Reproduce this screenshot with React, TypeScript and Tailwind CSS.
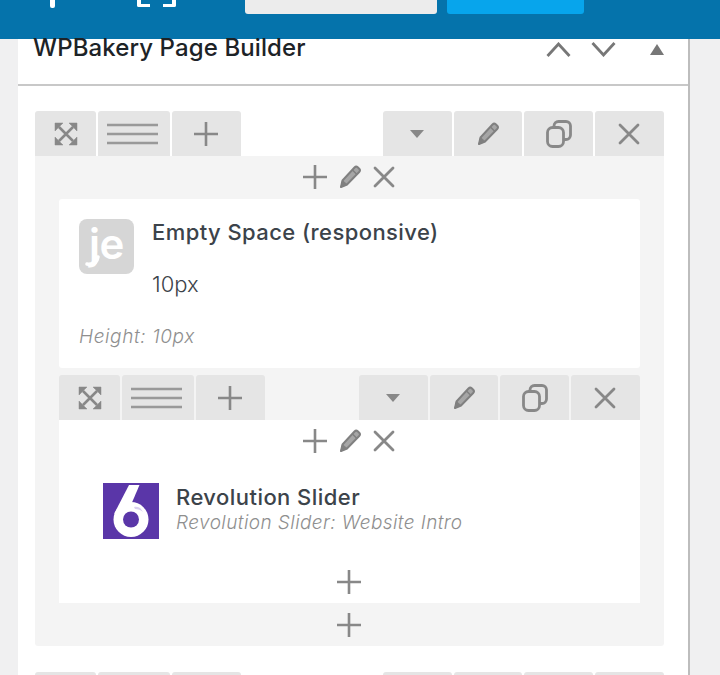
const font = { fontFamily: 'Inter, "Liberation Sans", sans-serif' }

function Plus({ size = 26 }: { size?: number }) {
  return (
    <svg width={size} height={size} viewBox="0 0 26 26" fill="none" stroke="#888" strokeWidth="2.6">
      <path d="M13 1v24M1 13h24" />
    </svg>
  )
}

function Cross({ size = 24 }: { size?: number }) {
  return (
    <svg width={size} height={size} viewBox="0 0 24 24" fill="none" stroke="#888" strokeWidth="2.8" strokeLinecap="round">
      <path d="M3 3l18 18M21 3L3 21" />
    </svg>
  )
}

function Pencil({ size = 24 }: { size?: number }) {
  return (
    <svg width={size} height={size} viewBox="0 0 24 24" fill="none">
      <path d="M16.500 2.500c1-1 2.300-1 3.200-.2l1.500 1.500c.9.900.9 2.200 0 3.200L9 19.500 3 22l1.500-6.500z" fill="#a6a6a6" stroke="#808080" strokeWidth="2" strokeLinejoin="round" />
      <path d="M3 22l1.500-6.500L9 19.500z" fill="#808080" stroke="#808080" />
      <path d="M14.500 5l4.500 4.500" stroke="#808080" strokeWidth="1.500" />
    </svg>
  )
}

function Expand() {
  return (
    <svg width="24" height="24" viewBox="0 0 24 24" fill="#888" stroke="#888">
      <path d="M1 1h8L6.500 3.500 3.500 6.500 1 9z M23 1h-8l2.500 2.500 3 3L23 9z M1 23h8l-2.500-2.500-3-3L1 15z M23 23h-8l2.500-2.500 3-3L23 15z" strokeWidth="0.5" />
      <path d="M5 5l14 14M19 5L5 19" fill="none" strokeWidth="2.600" />
    </svg>
  )
}

function Lines() {
  return (
    <svg width="51" height="24" viewBox="0 0 51 24" fill="none" stroke="#999" strokeWidth="2.600">
      <path d="M0 3h51M0 12h51M0 21h51" />
    </svg>
  )
}

function Caret() {
  return (
    <svg width="14" height="8" viewBox="0 0 14 8" fill="#888">
      <path d="M0 0h14L7 8z" />
    </svg>
  )
}

function Copy() {
  return (
    <svg width="26" height="28" viewBox="0 0 26 28" fill="none" stroke="#888" strokeWidth="2.800">
      <rect x="1.500" y="7.500" width="16" height="19" rx="5" />
      <path d="M8 7V6c0-2.500 2-4.500 4.500-4.500H20c2.500 0 4.500 2 4.500 4.500v9c0 2.500-2 4.500-4.500 4.500h-2.500" />
    </svg>
  )
}

function Tab({ className, children }: { className: string; children: React.ReactNode }) {
  return (
    <div className={`h-[45px] flex items-center justify-center bg-[#e5e5e5] rounded-t-[3px] ${className}`}>
      {children}
    </div>
  )
}

function RowToolbar() {
  return (
    <div className="flex justify-between h-[45px] shrink-0 overflow-hidden">
      <div className="flex gap-[2px]">
        <Tab className="w-[61px]"><Expand /></Tab>
        <Tab className="w-[72px] pr-[3px]"><Lines /></Tab>
        <Tab className="w-[69px] pr-[2px]"><Plus /></Tab>
      </div>
      <div className="flex gap-[2px]">
        <Tab className="w-[69px] pr-[2px]"><Caret /></Tab>
        <Tab className="w-[68px]"><Pencil /></Tab>
        <Tab className="w-[69px]"><Copy /></Tab>
        <Tab className="w-[69px] pr-[2px]"><Cross /></Tab>
      </div>
    </div>
  )
}

function ColumnControls() {
  return (
    <div className="h-[43px] flex items-center justify-center gap-[10px] pb-[1px] pr-[2px]">
      <Plus />
      <Pencil />
      <Cross />
    </div>
  )
}

function RevSliderLogo() {
  return (
    <svg width="56" height="56" viewBox="0 0 56 56" className="shrink-0">
      <rect width="56" height="56" fill="#5a36a8" />
      <path d="M26 2h10.500L29 19.500 11 31z" fill="#fff" />
      <circle cx="28" cy="36.500" r="17.500" fill="#fff" />
      <path d="M31 24c4-1 7 1 9 5-2-2-5-3-8-3z" fill="#d9cff0" />
      <circle cx="28" cy="36.500" r="8" fill="#5a36a8" />
    </svg>
  )
}

export default function App() {
  return (
    <div className="w-[720px] h-[675px] overflow-hidden bg-[#f0f0f1] relative" style={font}>
      {/* Top bar */}
      <div className="h-[39px] bg-[#0573ab] flex items-start">
        <div className="w-[245px] shrink-0 flex pl-[50px]">
          <div className="w-[5px] h-[8px] bg-white rounded-b-[2px]" />
          <div className="w-[13px] h-[7px] ml-[82px] border-b-[3px] border-l-[4px] border-white rounded-bl-[2px]" />
          <div className="w-[13px] h-[7px] ml-[13px] border-b-[3px] border-r-[4px] border-white rounded-br-[2px]" />
        </div>
        <div className="w-[192px] h-[14px] bg-[#ececec] rounded-b-[3px]" />
        <div className="w-[137px] h-[14px] ml-[10px] bg-[#07a5ec] rounded-b-[3px]" />
      </div>

      {/* Meta box */}
      <div className="ml-[18px] w-[672px] h-[636px] bg-white border-r-2 border-[#bdbdbd]">
        <div className="h-[47px] border-b-2 border-[#c8c8c8] flex items-start pl-[15px] pr-[24px]">
          <h2 className="text-[24px] leading-[17px] font-medium text-[#1d2327] tracking-[0.1px] flex-1 whitespace-nowrap">
            WPBakery Page Builder
          </h2>
          <div className="flex items-center gap-[20px] pt-[3px]">
            <svg width="25" height="15" viewBox="0 0 25 15" fill="none" stroke="#777" strokeWidth="2.800"><path d="M1.500 14L12.500 2l11 12" /></svg>
            <svg width="25" height="15" viewBox="0 0 25 15" fill="none" stroke="#777" strokeWidth="2.800"><path d="M1.500 1l11 12 11-12" /></svg>
            <svg width="14" height="11" viewBox="0 0 14 11" fill="#777" className="ml-[14px]"><path d="M7 0l7 11H0z" /></svg>
          </div>
        </div>

        <div className="pt-[25px] pl-[17px] pr-[24px]">
          <RowToolbar />
          <div className="bg-[#f4f4f4] rounded-b-[3px] h-[490px] flex flex-col">
            <ColumnControls />
            <div className="px-[24px]">
              <div className="bg-white h-[169px] rounded-[3px] pt-[20px] pl-[20px]">
                <div className="flex">
                  <div className="relative w-[55px] h-[55px] bg-[#d6d6d6] rounded-[8px] flex items-center justify-center text-white text-[42px] font-semibold leading-none pb-[6px] -tracking-[0.5px] shrink-0">
                    je
                    <svg width="22" height="12" viewBox="0 0 22 12" className="absolute left-[6px] bottom-[7px]" fill="none" stroke="#fff" strokeWidth="3.500" strokeLinecap="round">
                      <path d="M2 9c6 1 10-1 11-7" />
                    </svg>
                  </div>
                  <div className="ml-[18px]">
                    <div className="text-[22px] leading-[26px] font-medium text-[#3c434a] tracking-[0.42px] whitespace-nowrap">
                      Empty Space (responsive)
                    </div>
                    <div className="text-[22px] leading-[26px] font-light text-[#3c434a] mt-[26px]">10px</div>
                  </div>
                </div>
                <div className="mt-[28px] text-[19px] leading-[24px] italic font-light text-[#8f8f8f] tracking-[0.6px]">Height: 10px</div>
              </div>

              <div className="mt-[7px]">
                <RowToolbar />
                <div className="bg-white h-[183px] flex flex-col">
                  <ColumnControls />
                  <div className="flex items-center pl-[44px] mt-[20px]">
                    <RevSliderLogo />
                    <div className="ml-[17px] -mt-[3px]">
                      <div className="text-[22px] leading-[26px] font-medium text-[#3c434a] tracking-[0.45px] whitespace-nowrap">
                        Revolution Slider
                      </div>
                      <div className="text-[19px] leading-[26px] italic font-light text-[#8f8f8f] tracking-[0.42px] whitespace-nowrap">
                        Revolution Slider: Website Intro
                      </div>
                    </div>
                  </div>
                  <div className="flex justify-center mt-[30px] pr-[2px]"><Plus /></div>
                </div>
              </div>
            </div>
            <div className="flex justify-center mt-[9px] pr-[2px]"><Plus /></div>
          </div>

          <div className="mt-[26px]">
            <RowToolbar />
          </div>
        </div>
      </div>
    </div>
  )
}
